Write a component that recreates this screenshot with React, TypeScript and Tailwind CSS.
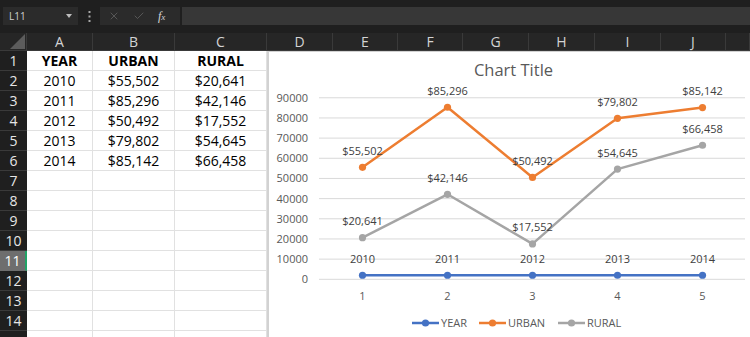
import { X, Check } from 'lucide-react'

const cols = ['A', 'B', 'C', 'D', 'E', 'F', 'G', 'H', 'I', 'J', 'K']
const gridCols = 'grid grid-cols-[27px_66px_82px_92px_66px_65px_65px_66px_66px_66px_65px_1fr]'

const table = [
    ['YEAR', 'URBAN', 'RURAL'],
    ['2010', '$55,502', '$20,641'],
    ['2011', '$85,296', '$42,146'],
    ['2012', '$50,492', '$17,552'],
    ['2013', '$79,802', '$54,645'],
    ['2014', '$85,142', '$66,458'],
]

const series = [
    { name: 'YEAR', color: '#4472C4', values: [2010, 2011, 2012, 2013, 2014], money: false },
    { name: 'URBAN', color: '#ED7D31', values: [55502, 85296, 50492, 79802, 85142], money: true },
    { name: 'RURAL', color: '#A5A5A5', values: [20641, 42146, 17552, 54645, 66458], money: true },
]

const px = (i: number) => 362.5 + i * 85
const py = (v: number) => 279.3 - v * 0.002017

function Chart() {
    return (
        <div className="absolute left-[267px] top-[51px] w-[483px] h-[286px] bg-white border-l-2 border-t border-[#d2d2d2]">
            <svg className="absolute -left-[2px] -top-[1px]" width={483} height={286} viewBox="267 51 483 286" fontFamily="'Open Sans', sans-serif">
                <text x={513.5} y={76} textAnchor="middle" fontSize={16.5} fill="#595959">Chart Title</text>
                {Array.from({ length: 10 }).map((_, i) => {
                    const y = py(i * 10000)
                    return (
                        <g key={i}>
                            <line x1={319} x2={745} y1={y} y2={y} stroke="#d9d9d9" strokeWidth={1} />
                            <text x={308} y={y + 4} textAnchor="end" fontSize={11} fill="#595959">{i * 10000}</text>
                        </g>
                    )
                })}
                {[1, 2, 3, 4, 5].map((n, i) => (
                    <text key={n} x={px(i)} y={300} textAnchor="middle" fontSize={11} fill="#595959">{n}</text>
                ))}
                {series.map((s) => (
                    <g key={s.name}>
                        <polyline
                            points={s.values.map((v, i) => `${px(i)},${py(v)}`).join(' ')}
                            fill="none"
                            stroke={s.color}
                            strokeWidth={2.5}
                            strokeLinejoin="round"
                        />
                        {s.values.map((v, i) => (
                            <g key={i}>
                                <circle cx={px(i)} cy={py(v)} r={3.6} fill={s.color} />
                                <text x={px(i)} y={py(v) - 12.5} textAnchor="middle" fontSize={11} fill="#404040">
                                    {s.money ? '$' + v.toLocaleString('en-US') : v}
                                </text>
                            </g>
                        ))}
                    </g>
                ))}
                {[
                    { x: 412, name: 'YEAR', color: '#4472C4' },
                    { x: 479, name: 'URBAN', color: '#ED7D31' },
                    { x: 558, name: 'RURAL', color: '#A5A5A5' },
                ].map((l) => (
                    <g key={l.name}>
                        <line x1={l.x} x2={l.x + 27} y1={323} y2={323} stroke={l.color} strokeWidth={2.5} />
                        <circle cx={l.x + 13.5} cy={323} r={3.6} fill={l.color} />
                        <text x={l.x + 29} y={327} fontSize={11} fill="#595959">{l.name}</text>
                    </g>
                ))}
            </svg>
        </div>
    )
}

export default function App() {
    return (
        <div className="relative w-[750px] h-[337px] overflow-hidden bg-[#1f1f1f] font-['Open_Sans',sans-serif]">
            {/* formula bar */}
            <div className="h-[33px] pt-[7px] flex items-start">
                <div className="ml-[3px] w-[75px] h-[18px] bg-[#2b2b2b] flex items-center justify-between pl-[6px] pr-[6px] text-[10px] text-[#cfcfcf]">
                    <span>L11</span>
                    <svg width="6" height="4" viewBox="0 0 6 4"><path d="M0 0h6L3 4z" fill="#bdbdbd" /></svg>
                </div>
                <div className="w-[22px] h-[18px] flex items-center justify-center">
                    <svg width="3" height="11" viewBox="0 0 3 11" fill="#a8a8a8">
                        <rect x="0.5" y="0" width="2" height="2" />
                        <rect x="0.5" y="4.5" width="2" height="2" />
                        <rect x="0.5" y="9" width="2" height="2" />
                    </svg>
                </div>
                <div className="w-[80px] h-[18px] bg-[#2b2b2b] flex items-center pl-[8px] gap-[13px] text-[#666]">
                    <X size={12} strokeWidth={1.5} />
                    <Check size={12} strokeWidth={1.5} />
                    <span className="font-['Liberation_Serif',serif] italic text-[12px] text-[#d6d6d6] leading-none">f<span className="text-[9px]">x</span></span>
                </div>
                <div className="ml-[2px] flex-1 h-[18px] bg-[#373737]" />
            </div>

            {/* column headers */}
            <div className={`${gridCols} h-[18px] bg-[#262626] border-b border-[#3a3a3a]`}>
                <div className="relative border-r border-[#3a3a3a]">
                    <svg className="absolute right-[1px] bottom-[1px]" width="15" height="15" viewBox="0 0 15 15">
                        <path d="M15 0V15H0z" fill="#5c5c5c" />
                    </svg>
                </div>
                {cols.map((c) => (
                    <div key={c} className="flex items-center justify-center text-[14px] text-[#d4d4d4] border-r border-[#3a3a3a] leading-none">
                        {c === 'K' ? '' : c}
                    </div>
                ))}
            </div>

            {/* rows */}
            {Array.from({ length: 15 }).map((_, r) => (
                <div key={r} className={`${gridCols} h-[20px]`}>
                    <div
                        className={`flex items-center justify-center text-[14px] leading-none border-b ${
                            r === 10
                                ? 'bg-[#6e6e6e] text-white border-[#6e6e6e] border-r-2 border-r-[#21a366]'
                                : 'bg-[#1f1f1f] text-[#e6e6e6] border-[#3a3a3a]'
                        }`}
                    >
                        {r < 14 ? r + 1 : ''}
                    </div>
                    {cols.map((c, ci) => (
                        <div
                            key={c}
                            className={`bg-white border-r border-b border-[#e1e1e1] flex items-center justify-center pt-[1px] text-[14px] text-black leading-none ${
                                r === 0 ? 'font-bold' : ''
                            }`}
                        >
                            {ci < 3 && table[r] ? table[r][ci] : ''}
                        </div>
                    ))}
                </div>
            ))}

            <Chart />
        </div>
    )
}
